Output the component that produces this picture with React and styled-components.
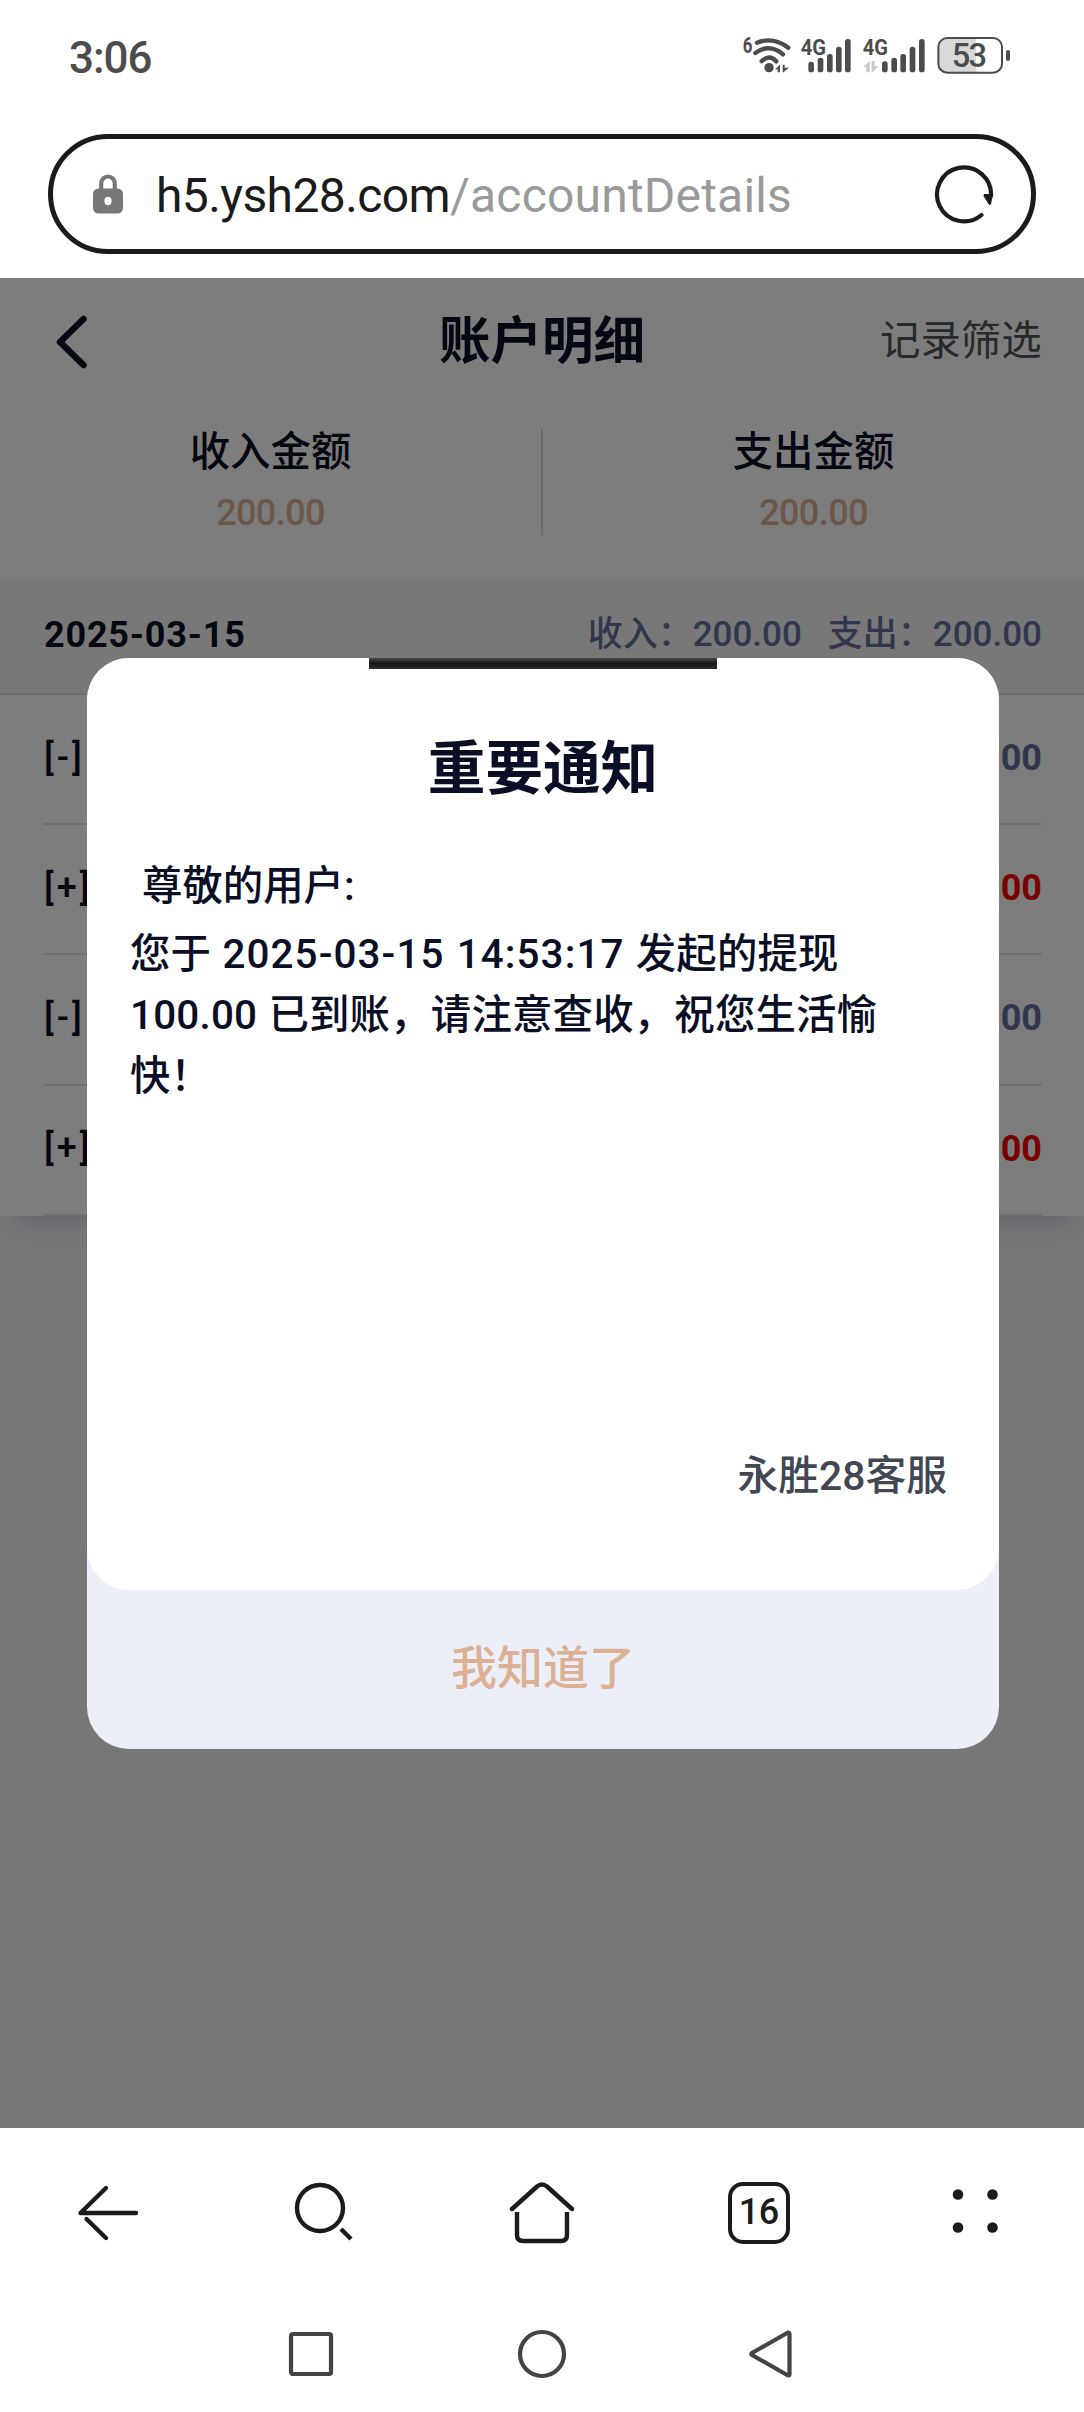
// 账户明细页面 + 重要通知弹窗
import React from "react";
import styled, { createGlobalStyle } from "styled-components";

const records = [
  { sign: "[-]", amount: "100.00", income: false },
  { sign: "[+]", amount: "100.00", income: true },
  { sign: "[-]", amount: "100.00", income: false },
  { sign: "[+]", amount: "100.00", income: true },
];

// x, top
const firstSim = [
  [265, 125],
  [293, 113],
  [321, 102],
  [348, 80],
  [375, 57],
];
const secondSim = [
  [486, 124],
  [514, 113],
  [541, 102],
  [569, 80],
  [597, 57],
];

const SignalBars = ({ bars }) =>
  bars.map(([x, y]) => (
    <rect key={x} x={x} y={y} width="17" height={157 - y} rx="8" />
  ));

const StatusIcons = () => (
  <svg width="320" height="80" viewBox="0 0 960 240" fill="#4c4c4c">
    <g fontFamily="Roboto" fontWeight="700">
      <text x="68" y="99" fontSize="64" textLength="29" lengthAdjust="spacingAndGlyphs">
        6
      </text>
      <text x="242" y="105" fontSize="68" textLength="76" lengthAdjust="spacingAndGlyphs">
        4G
      </text>
      <text x="428" y="105" fontSize="68" textLength="76" lengthAdjust="spacingAndGlyphs">
        4G
      </text>
    </g>
    <g fill="none" stroke="#4c4c4c" strokeWidth="13" strokeLinecap="round">
      <path d="M111 68 Q160 49 205 83" />
      <path d="M106 99 Q148 69 189 103" />
      <path d="M125 124 Q148 101 169 124" />
    </g>
    <circle cx="147" cy="143" r="14" />
    <path d="M165 148 L180 134 V157 H173 V148 Z M188 134 H194 V143 H207 L190 157 H188 Z" />
    <SignalBars bars={firstSim} />
    <path
      fill="#c8c8c8"
      d="M430 141 L449 123 V157 H439 V141 Z M455 123 H464 V139 H476 L457 157 H455 Z"
    />
    <SignalBars bars={secondSim} />
    <path fill="#d9d9d9" d="M682 55 H768 V158 H682 Q656 158 656 132 V81 Q656 55 682 55 Z" />
    <rect x="655" y="54" width="191" height="104" rx="27" fill="none" stroke="#4c4c4c" strokeWidth="6" />
    <rect x="858" y="90" width="12" height="33" rx="6" />
    <text x="748" y="140" fontSize="98" fontFamily="Roboto" fontWeight="500" textAnchor="middle" textLength="106">
      53
    </text>
  </svg>
);

const LockIcon = () => (
  <svg width="30" height="40" viewBox="0 0 30 40">
    <path d="M8.2 17 V9.5 a6.8 7 0 0 1 13.6 0 V17" fill="none" stroke="#777" strokeWidth="4.2" />
    <rect y="14.5" width="30" height="25" rx="5.5" fill="#777" />
    <ellipse cx="15" cy="27" rx="3.6" ry="4.2" fill="#fff" />
  </svg>
);

const ReloadIcon = () => (
  <svg width="60" height="60" viewBox="0 0 60 60">
    <path
      d="M47.5 51 A27 27 0 1 1 57 32"
      fill="none"
      stroke="#1b1b1b"
      strokeWidth="4.2"
      strokeLinecap="round"
    />
    <path d="M50 30 H59 L57 40 Q55.5 42 54.5 40 L49.5 32 Z" fill="#1b1b1b" />
  </svg>
);

export default function App() {
  return (
    <Screen>
      <GlobalStyle />
      <StatusBar>
        <Clock>3:06</Clock>
        <StatusIcons />
      </StatusBar>

      <UrlBar>
        <LockIcon />
        <UrlText>
          <span>h5.ysh28.com</span>
          <UrlPath>/accountDetails</UrlPath>
        </UrlText>
        <ReloadIcon />
      </UrlBar>

      <Page>
        <Header>
          <svg width="34" height="54" viewBox="0 0 34 54">
            <path
              d="M29.5 4 L6 27 L29.5 50"
              fill="none"
              stroke="#0b0f26"
              strokeWidth="6.5"
              strokeLinecap="round"
              strokeLinejoin="round"
            />
          </svg>
          <PageTitle>账户明细</PageTitle>
          <Filter>记录筛选</Filter>
        </Header>

        <Totals>
          <Total>
            <TotalLabel>收入金额</TotalLabel>
            <TotalValue>200.00</TotalValue>
          </Total>
          <Divider />
          <Total>
            <TotalLabel>支出金额</TotalLabel>
            <TotalValue>200.00</TotalValue>
          </Total>
        </Totals>

        <Records>
          <DayBar>
            <Day>2025-03-15</Day>
            <DaySum>
              <span>收入：200.00</span>
              <span>支出：200.00</span>
            </DaySum>
          </DayBar>
          {records.map((record, index) => (
            <Record key={index}>
              <Sign>{record.sign}</Sign>
              <Amount $income={record.income}>{record.amount}</Amount>
            </Record>
          ))}
        </Records>

        <Mask>
          <Dialog>
            <DialogBody>
              <DialogBar />
              <DialogTitle>重要通知</DialogTitle>
              <Greeting>尊敬的用户:</Greeting>
              <Message>
                您于 <Time>2025-03-15 14:53:17</Time> 发起的提现 100.00
                已到账，请注意查收，祝您生活愉快！
              </Message>
              <Signature>永胜28客服</Signature>
            </DialogBody>
            <Confirm>我知道了</Confirm>
          </Dialog>
        </Mask>
      </Page>

      <BrowserNav>
        <svg width="62" height="64" viewBox="0 0 62 64">
          <path d="M3.5 32 H59 M3.5 32 L29 7 M9.5 38 L29 57" />
        </svg>
        <svg width="64" height="64" viewBox="0 0 64 64">
          <circle cx="27" cy="27" r="23" />
          <path d="M48 48 L58 58" strokeLinecap="butt" />
        </svg>
        <svg width="66" height="64" viewBox="0 0 66 64">
          <path d="M3 28 L28 5.5 Q33 1.5 38 5.5 L63 28" />
          <path d="M8 31 V54 Q8 60 14 60 H52 Q58 60 58 54 V31" strokeLinecap="butt" />
        </svg>
        <TabCount>16</TabCount>
        <svg width="62" height="64" viewBox="0 0 62 64">
          <g fill="#1b1b1b" stroke="none">
            <circle cx="13" cy="13.5" r="5.3" />
            <circle cx="47.5" cy="13.5" r="5.3" />
            <circle cx="13" cy="46.5" r="5.3" />
            <circle cx="47.5" cy="46.5" r="5.3" />
          </g>
        </svg>
      </BrowserNav>

      <SystemNav>
        <svg width="50" height="50" viewBox="0 0 50 50">
          <rect x="5" y="5" width="40" height="40" rx="2" />
        </svg>
        <svg width="50" height="50" viewBox="0 0 50 50">
          <circle cx="25" cy="25" r="22" />
        </svg>
        <svg width="50" height="50" viewBox="0 0 50 50">
          <path d="M40 3.5 L4 24 Q2.5 25 4 26 L40 46.5 Q41.5 46.5 41.5 45 V5 Q41.5 3.5 40 3.5 Z" />
        </svg>
      </SystemNav>
    </Screen>
  );
}

const GlobalStyle = createGlobalStyle`
  * {
    box-sizing: border-box;
  }
  body {
    margin: 0;
    background: #fff;
    font-family: Roboto, "Noto Sans CJK SC", sans-serif;
  }
  svg {
    display: block;
    flex-shrink: 0;
  }
`;

const Screen = styled.div`
  width: 1084px;
  height: 2412px;
  display: flex;
  flex-direction: column;
  overflow: hidden;
  color: #0b0f26;
`;

const StatusBar = styled.div`
  height: 134px;
  padding: 20px 44px 0 69px;
  display: flex;
  justify-content: space-between;
  align-items: flex-start;
`;

const Clock = styled.div`
  margin-top: 12px;
  font-size: 44px;
  font-weight: 500;
  line-height: 52px;
  letter-spacing: -1px;
  color: #4c4c4c;
`;

const UrlBar = styled.div`
  height: 120px;
  margin: 0 48px 24px;
  padding: 0 37px 0 40px;
  border: 5px solid #1b1b1b;
  border-radius: 60px;
  display: flex;
  align-items: center;
`;

const UrlText = styled.div`
  flex: 1;
  margin: 3px 0 0 33px;
  font-size: 48px;
  line-height: 60px;
  letter-spacing: -0.6px;
  color: #1b1b1b;
  white-space: nowrap;
`;

const UrlPath = styled.span`
  letter-spacing: 0.2px;
  color: #9a9a9a;
`;

const Page = styled.div`
  position: relative;
  height: 1850px;
  background: #eeeeee;
`;

const Header = styled.div`
  height: 127px;
  padding: 0 42px 0 54px;
  display: grid;
  grid-template-columns: 160px 1fr 162px;
  align-items: center;
  background: #fafafa;
`;

const PageTitle = styled.div`
  padding-right: 10px;
  text-align: center;
  font-size: 51.5px;
  font-weight: 700;
  line-height: 70px;
`;

const Filter = styled.div`
  padding-top: 1px;
  font-size: 40.4px;
  line-height: 60px;
  color: #505259;
  white-space: nowrap;
`;

const Totals = styled.div`
  height: 174px;
  padding-top: 18px;
  display: flex;
  background: #fafafa;
`;

const Total = styled.div`
  flex: 1;
  text-align: center;
`;

const TotalLabel = styled.div`
  font-size: 40.4px;
  font-weight: 500;
  line-height: 60px;
`;

const TotalValue = styled.div`
  font-size: 36px;
  font-weight: 500;
  line-height: 60px;
  letter-spacing: -0.6px;
  color: #d8ac90;
`;

const Divider = styled.div`
  width: 2px;
  height: 106px;
  margin-top: 6px;
  background: #d5d6e0;
`;

const Records = styled.div`
  background: #fafafa;
  box-shadow: 0 22px 18px -16px rgba(110, 125, 180, 0.3);
`;

const DayBar = styled.div`
  height: 116px;
  padding: 0 42px 3px 44px;
  display: flex;
  justify-content: space-between;
  align-items: center;
  background: #f0f0f3;
  border-bottom: 2px solid #dadbe0;
`;

const Day = styled.div`
  font-size: 36px;
  font-weight: 700;
  line-height: 42px;
  letter-spacing: 0.8px;
`;

const DaySum = styled.div`
  display: flex;
  gap: 26px;
  font-size: 35px;
  font-weight: 500;
  line-height: 42px;
  color: #606c98;
`;

const Record = styled.div`
  height: 130.2px;
  margin: 0 42px 0 43px;
  display: flex;
  justify-content: space-between;
  align-items: center;
  border-bottom: 2px solid #dfdfe2;
`;

const Sign = styled.div`
  margin: -3px 0 0 1px;
  font-size: 36px;
  font-weight: 500;
  letter-spacing: 3px;
`;

const Amount = styled.div`
  margin-top: -2px;
  font-size: 36px;
  font-weight: 700;
  color: ${(props) => (props.$income ? "#f20000" : "#606c98")};
`;

const Mask = styled.div`
  position: absolute;
  inset: 0;
  display: flex;
  justify-content: center;
  align-items: center;
  background: rgba(0, 0, 0, 0.5);
`;

const Dialog = styled.div`
  width: 912px;
  height: 1091px;
  margin-left: 2px;
  border-radius: 42px;
  display: flex;
  flex-direction: column;
  overflow: hidden;
  background: #eceff7;
`;

const DialogBody = styled.div`
  height: 932px;
  padding: 0 52px 0 43px;
  display: flex;
  flex-direction: column;
  border-radius: 0 0 42px 42px;
  background: #fff;
`;

const DialogBar = styled.div`
  width: 348px;
  height: 11px;
  margin-left: 239px;
  background: linear-gradient(#484848, #161616 50%, #303030);
`;

const DialogTitle = styled.div`
  margin: 60px -9px 0 0;
  text-align: center;
  font-size: 57.6px;
  font-weight: 700;
  line-height: 82px;
`;

const Greeting = styled.div`
  margin: 46px 0 0 12px;
  font-size: 40.4px;
  font-weight: 500;
  line-height: 60px;
`;

const Message = styled.div`
  width: 775px;
  margin-top: 7px;
  font-size: 40.4px;
  font-weight: 500;
  line-height: 61px;
  letter-spacing: 0.2px;
  word-spacing: 1px;
`;

const Time = styled.span`
  letter-spacing: 1.1px;
`;

const Signature = styled.div`
  margin-top: auto;
  margin-bottom: 84px;
  text-align: right;
  font-size: 40.8px;
  font-weight: 500;
  line-height: 60px;
  color: #434653;
`;

const Confirm = styled.div`
  flex: 1;
  padding-bottom: 11px;
  display: flex;
  justify-content: center;
  align-items: center;
  font-size: 46px;
  font-weight: 500;
  color: #dbb093;
`;

const BrowserNav = styled.div`
  height: 170px;
  display: grid;
  grid-template-columns: repeat(5, 1fr);
  place-items: center;
  fill: none;
  stroke: #1b1b1b;
  stroke-width: 4.4;
  stroke-linecap: round;
  stroke-linejoin: round;
`;

const TabCount = styled.div`
  width: 62px;
  height: 62px;
  border: 4.4px solid #1b1b1b;
  border-radius: 15px;
  font-size: 36px;
  font-weight: 500;
  line-height: 52px;
  letter-spacing: -0.5px;
  text-align: center;
  color: #1b1b1b;
`;

const SystemNav = styled.div`
  height: 114px;
  padding: 0 196px 2px;
  display: grid;
  grid-template-columns: repeat(3, 1fr);
  place-items: center;
  fill: none;
  stroke: #444;
  stroke-width: 4.2;
`;
